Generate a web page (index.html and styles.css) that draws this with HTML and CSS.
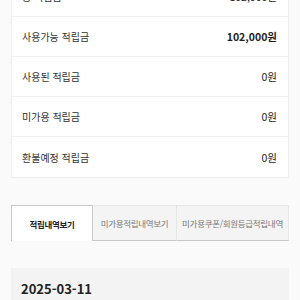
FILE: index.html
```html
<!DOCTYPE html>
<html lang="ko">
<head>
    <meta charset="UTF-8">
    <meta name="viewport" content="width=device-width, initial-scale=1.0">
    <title>적립금</title>
    <link rel="stylesheet" href="styles.css">
</head>
<body>
    <div class="wrap">
        <div class="mileage">
            <div class="row"><span>총 적립금</span><span class="val">102,000원</span></div>
            <div class="row"><span>사용가능 적립금</span><span class="val strong">102,000원</span></div>
            <div class="row"><span>사용된 적립금</span><span class="val">0원</span></div>
            <div class="row"><span>미가용 적립금</span><span class="val">0원</span></div>
            <div class="row"><span>환불예정 적립금</span><span class="val">0원</span></div>
        </div>

        <ul class="tabs">
            <li class="tab on">적립내역보기</li>
            <li class="tab t2">미가용적립내역보기</li>
            <li class="tab t3">미가용쿠폰/회원등급적립내역</li>
        </ul>

        <div class="history">
            <div class="date">2025-03-11</div>
        </div>
    </div>
</body>
</html>
```

FILE: styles.css
```css
body {
    margin: 0;
    background: #fafafa;
    font-family: "Noto Sans CJK KR", "Noto Sans", sans-serif;
    color: #333;
}
.wrap {
    padding: 0 11px;
}
.mileage {
    margin-top: -24px;
    background: #fff;
    border: 1px solid #eee;
}
.row {
    display: flex;
    justify-content: space-between;
    align-items: center;
    height: 40px;
    padding: 0 11px 0 10px;
    border-bottom: 1px solid #f0f0f0;
    font-size: 10px;
    box-sizing: border-box;
}
.row:last-child {
    border-bottom: 0;
}
.row .val {
    font-size: 10.5px;
    color: #222;
}
.row .strong {
    font-weight: bold;
}
.tabs {
    display: flex;
    list-style: none;
    margin: 27px 0 0;
    padding: 0;
}
.tab {
    height: 36px;
    display: flex;
    align-items: center;
    justify-content: center;
    font-size: 8.5px;
    letter-spacing: -0.3px;
    white-space: nowrap;
    color: #777;
    background: #f4f4f4;
    border-top: 1px solid #e6e6e6;
    border-right: 1px solid #e6e6e6;
    border-bottom: 1px solid #c8c8c8;
    box-sizing: border-box;
}
.tab.on {
    width: 82px;
    background: #fff;
    color: #222;
    font-weight: bold;
    border: 1px solid #c8c8c8;
    border-bottom: 0;
}
.tab.t2 {
    width: 84px;
}
.tab.t3 {
    flex: 1;
}
.history {
    margin-top: 27px;
    background: #f3f3f3;
    padding: 11px 10px;
}
.date {
    font-size: 13px;
    font-weight: bold;
    color: #222;
}
```
